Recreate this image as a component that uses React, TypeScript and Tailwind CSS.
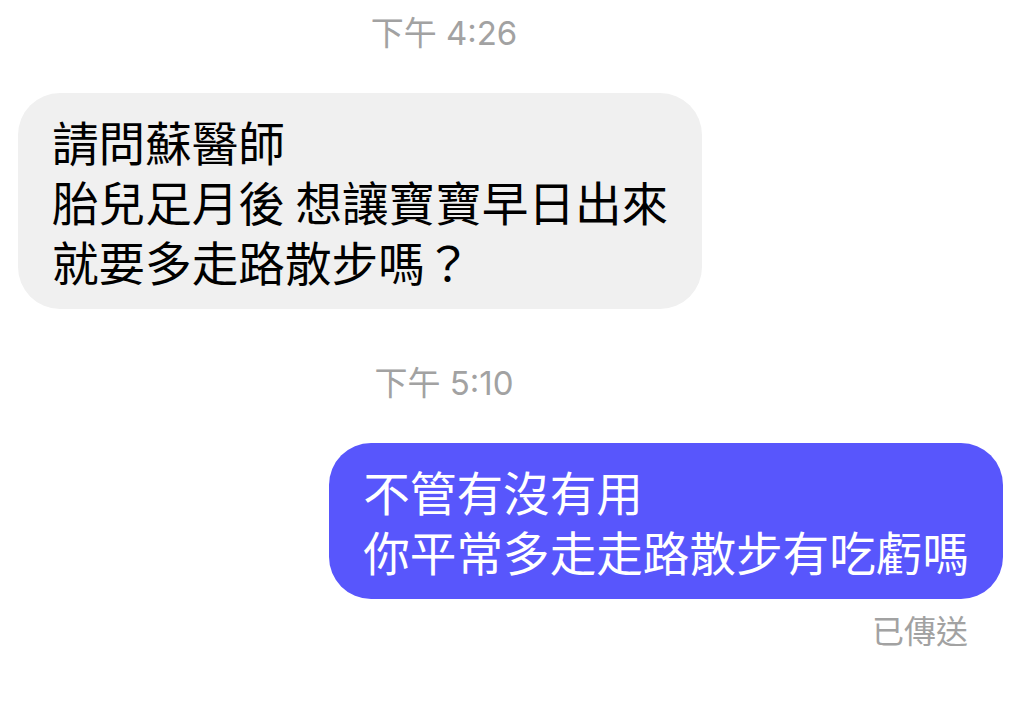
export default function App() {
  const cjk = { fontFamily: '"Noto Sans CJK TC", "Noto Sans", sans-serif' };
  const stamp = { fontFamily: 'Inter, "Noto Sans CJK TC", sans-serif' };

  const incoming = ["請問蘇醫師", "胎兒足月後 想讓寶寶早日出來", "就要多走路散步嗎？"];
  const outgoing = ["不管有沒有用", "你平常多走走路散步有吃虧嗎"];

  return (
    <div className="w-[1024px] h-[707px] bg-white overflow-hidden" style={cjk}>
      <div className="pt-[13px]">
        <p className="w-[888px] text-center text-[33px] leading-[40px] text-[#a2a2a2]" style={stamp}>
          下午 4:26
        </p>

        <div className="mt-[40px] ml-[18px] inline-block rounded-[42px] bg-[#f0f0f0] px-[34px] py-[18px]">
          <p className="text-[46.6px] leading-[60px] text-black whitespace-pre">
            {incoming.join("\n")}
          </p>
        </div>

        <p className="mt-[54px] w-[888px] text-center text-[33px] leading-[40px] text-[#a2a2a2]" style={stamp}>
          下午 5:10
        </p>

        <div className="mt-[40px] mr-[21px] flex justify-end">
          <div className="rounded-[42px] bg-[#5856fc] px-[34px] py-[18px]">
            <p className="text-[46.6px] leading-[60px] text-white whitespace-pre">
              {outgoing.join("\n")}
            </p>
          </div>
        </div>

        <p className="mt-[10px] mr-[56px] text-right text-[32px] leading-[40px] text-[#a2a2a2]">
          已傳送
        </p>
      </div>
    </div>
  );
}
